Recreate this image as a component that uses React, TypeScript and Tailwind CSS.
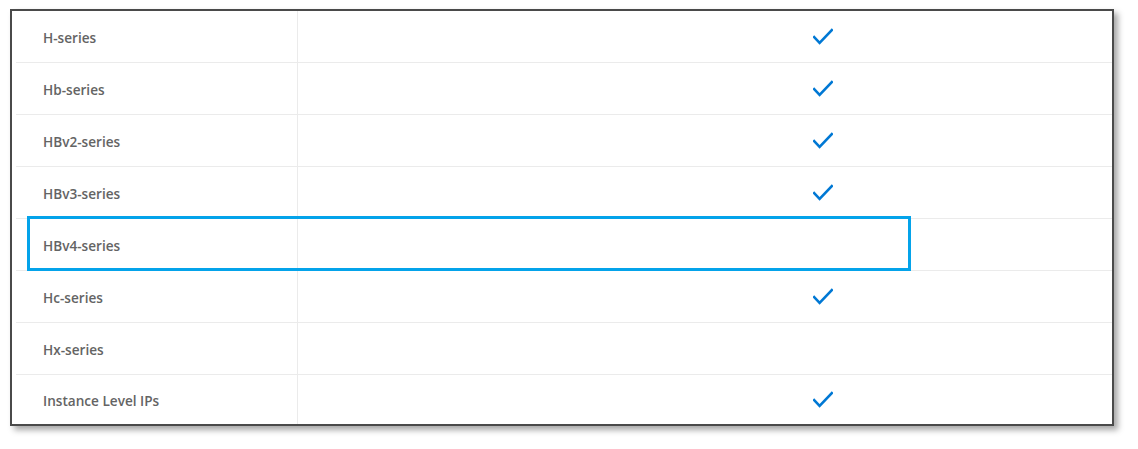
const rows = [
  { name: 'H-series', supported: true },
  { name: 'Hb-series', supported: true },
  { name: 'HBv2-series', supported: true },
  { name: 'HBv3-series', supported: true },
  { name: 'HBv4-series', supported: false },
  { name: 'Hc-series', supported: true },
  { name: 'Hx-series', supported: false },
  { name: 'Instance Level IPs', supported: true },
];

function Check() {
  return (
    <svg width="20" height="18" viewBox="0 0 20 18" fill="none">
      <path d="M1.2 9.2 L6.6 14.8 L18.8 2.2" stroke="#0078d4" strokeWidth="2.6" strokeLinecap="square" />
    </svg>
  );
}

export default function App() {
  return (
    <div className="w-[1138px] h-[449px] bg-white pl-[10px] pt-[9px]" style={{ fontFamily: '"Open Sans", "Noto Sans", sans-serif' }}>
      <div className="relative w-[1104px] h-[417px] border-2 border-[#4a4a4a] bg-white shadow-[4px_4px_6px_rgba(0,0,0,0.35)] flex flex-col pl-1">
        {rows.map((row, i) => (
          <div
            key={row.name}
            className={i < rows.length - 1 ? 'flex h-[52px] border-b border-[#ebebeb] shrink-0' : 'flex flex-1'}
          >
            <div className="w-[282px] border-r border-[#ebebeb] flex items-center pl-[27px] pt-[4px] text-[13.6px] font-semibold text-[#646464]">
              {row.name}
            </div>
            <div className="flex-1 flex items-center pl-[515px] pt-[1px]">
              {row.supported && <Check />}
            </div>
          </div>
        ))}

        {/* highlight */}
        <div className="absolute left-[15px] top-[205px] w-[884px] h-[55px] border-[3px] border-[#04a3ea]" />
      </div>
    </div>
  );
}
